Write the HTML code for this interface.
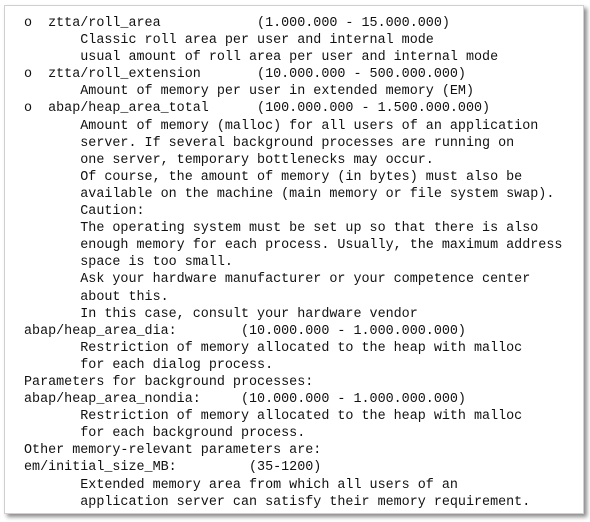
<!DOCTYPE html>
<html><head><style>
body{margin:0;background:#fff;width:590px;height:522px;overflow:hidden}
.box{position:absolute;left:4px;top:5px;width:578px;height:507px;border:1px solid #d0d0d0;background:#fff;box-shadow:3px 3px 4px rgba(0,0,0,.45)}
pre{position:absolute;left:24px;top:15px;margin:0;font-family:"Liberation Mono",monospace;font-size:13.4px;line-height:17.1px;color:#111}
</style></head><body><div class="box"></div><pre>o  ztta/roll_area            (1.000.000 - 15.000.000)
       Classic roll area per user and internal mode
       usual amount of roll area per user and internal mode
o  ztta/roll_extension       (10.000.000 - 500.000.000)
       Amount of memory per user in extended memory (EM)
o  abap/heap_area_total      (100.000.000 - 1.500.000.000)
       Amount of memory (malloc) for all users of an application
       server. If several background processes are running on
       one server, temporary bottlenecks may occur.
       Of course, the amount of memory (in bytes) must also be
       available on the machine (main memory or file system swap).
       Caution:
       The operating system must be set up so that there is also
       enough memory for each process. Usually, the maximum address
       space is too small.
       Ask your hardware manufacturer or your competence center
       about this.
       In this case, consult your hardware vendor
abap/heap_area_dia:        (10.000.000 - 1.000.000.000)
       Restriction of memory allocated to the heap with malloc
       for each dialog process.
Parameters for background processes:
abap/heap_area_nondia:     (10.000.000 - 1.000.000.000)
       Restriction of memory allocated to the heap with malloc
       for each background process.
Other memory-relevant parameters are:
em/initial_size_MB:         (35-1200)
       Extended memory area from which all users of an
       application server can satisfy their memory requirement.</pre></body></html>
